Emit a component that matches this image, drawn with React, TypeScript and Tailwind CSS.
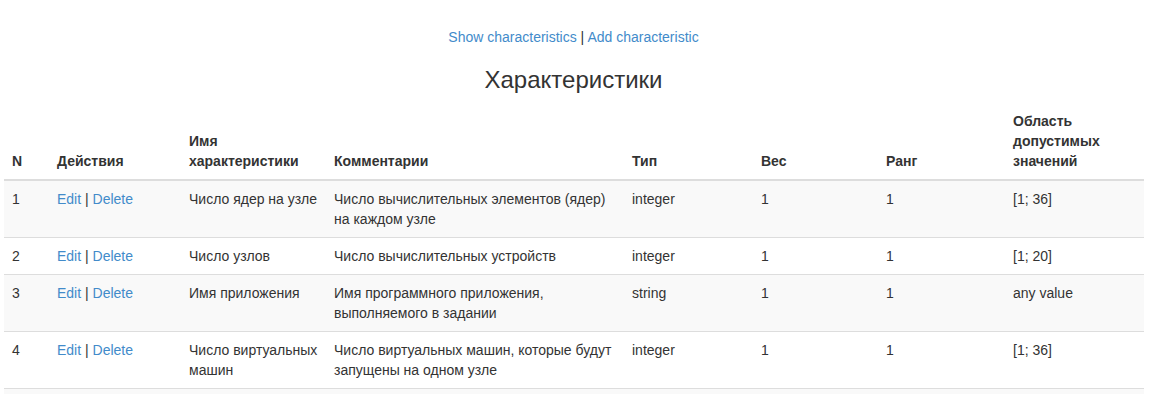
import React from "react";

const rows = [
  { n: "1", name: "Число ядер на узле", comment: "Число вычислительных элементов (ядер) на каждом узле", type: "integer", w: "1", r: "1", range: "[1; 36]" },
  { n: "2", name: "Число узлов", comment: "Число вычислительных устройств", type: "integer", w: "1", r: "1", range: "[1; 20]" },
  { n: "3", name: "Имя приложения", comment: "Имя программного приложения, выполняемого в задании", type: "string", w: "1", r: "1", range: "any value" },
  { n: "4", name: "Число виртуальных машин", comment: "Число виртуальных машин, которые будут запущены на одном узле", type: "integer", w: "1", r: "1", range: "[1; 36]" },
];

export default function App() {
  return (
    <div className="bg-white text-[#333] text-[14px] leading-[20px] pl-[4px] pr-[8px] overflow-hidden" style={{ fontFamily: '"Liberation Sans", Arial, sans-serif' }}>
      <div className="pt-[27px] text-center">
        <a className="text-[#428bca]" href="#">Show characteristics</a> | <a className="text-[#428bca]" href="#">Add characteristic</a>
      </div>
      <h2 className="text-center text-[24px] leading-[26px] mt-[20px] mb-[10px] font-normal">Характеристики</h2>
      <table className="w-[1140px] table-fixed border-collapse">
        <colgroup>
          <col className="w-[45px]" />
          <col className="w-[132px]" />
          <col className="w-[145px]" />
          <col className="w-[298px]" />
          <col className="w-[129px]" />
          <col className="w-[125px]" />
          <col className="w-[127px]" />
          <col className="w-[139px]" />
        </colgroup>
        <thead>
          <tr>
            {["N", "Действия", "Имя характеристики", "Комментарии", "Тип", "Вес", "Ранг", "Область допустимых значений"].map((h) => (
              <th key={h} className="p-[8px] text-left align-bottom font-bold border-b-2 border-[#ddd]">
                {h}
              </th>
            ))}
          </tr>
        </thead>
        <tbody>
          {rows.map((r, i) => (
            <tr key={r.n} className={i % 2 === 0 ? "bg-[#f9f9f9]" : ""}>
              <td className="p-[8px] align-top border-t border-[#ddd]">{r.n}</td>
              <td className="p-[8px] align-top border-t border-[#ddd]">
                <a className="text-[#428bca]" href="#">Edit</a> | <a className="text-[#428bca]" href="#">Delete</a>
              </td>
              <td className="p-[8px] align-top border-t border-[#ddd]">{r.name}</td>
              <td className="p-[8px] align-top border-t border-[#ddd]">{r.comment}</td>
              <td className="p-[8px] align-top border-t border-[#ddd]">{r.type}</td>
              <td className="p-[8px] align-top border-t border-[#ddd]">{r.w}</td>
              <td className="p-[8px] align-top border-t border-[#ddd]">{r.r}</td>
              <td className="p-[8px] align-top border-t border-[#ddd]">{r.range}</td>
            </tr>
          ))}
          <tr className="bg-[#f9f9f9]">
            <td colSpan={8} className="p-[8px] border-t border-[#ddd] h-[37px]"></td>
          </tr>
        </tbody>
      </table>
    </div>
  );
}
